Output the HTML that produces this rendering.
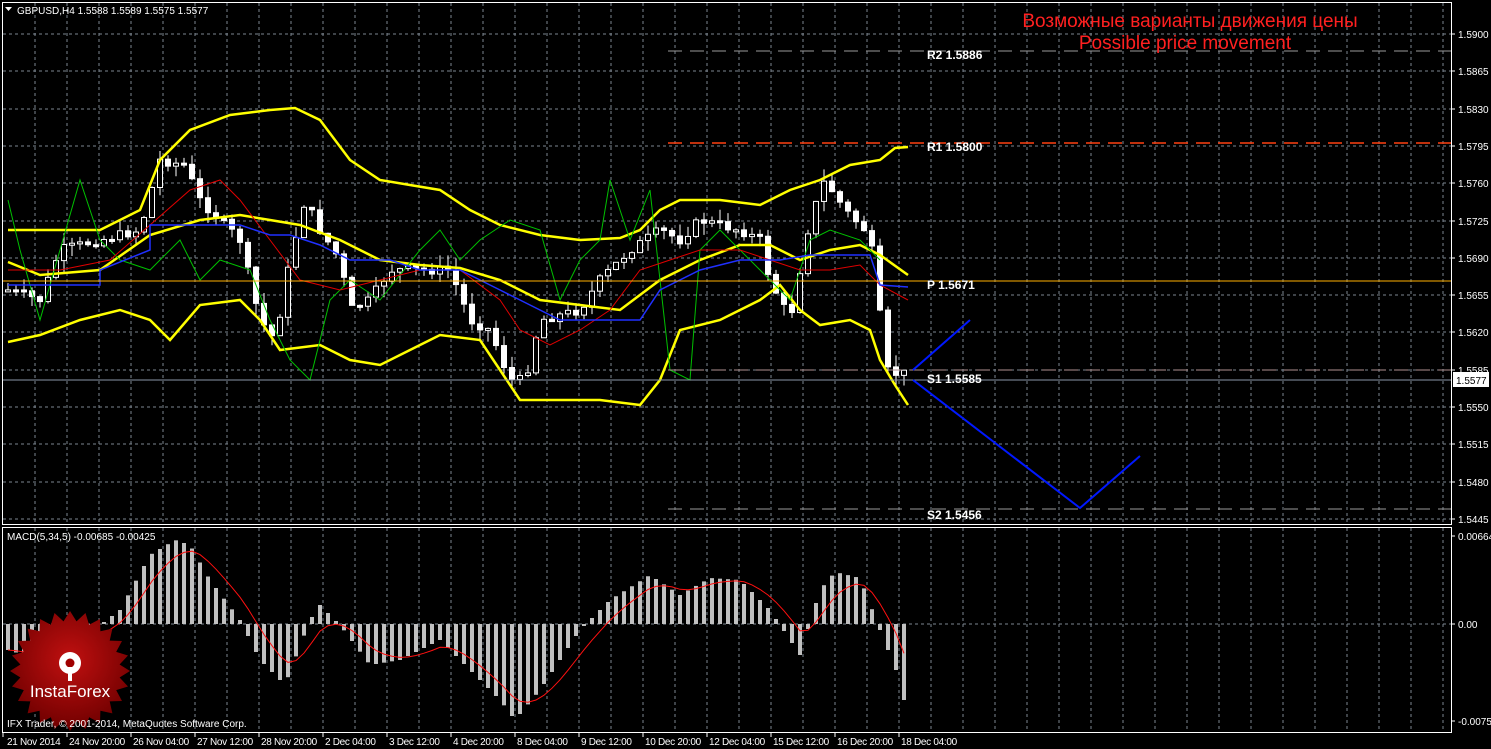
<!DOCTYPE html>
<html><head><meta charset="utf-8"><style>
html,body{margin:0;padding:0;background:#000;width:1491px;height:749px;overflow:hidden}
svg{display:block}
text{font-family:"Liberation Sans",sans-serif}
</style></head><body>
<svg id="s" width="1491" height="749" xmlns="http://www.w3.org/2000/svg">
<defs><radialGradient id="rg" cx="0.5" cy="0.4" r="0.6"><stop offset="0" stop-color="#c01010"/><stop offset="1" stop-color="#700000"/></radialGradient></defs>
<rect width="1491" height="749" fill="#000"/>
<g id="grid" stroke="#7c8690" stroke-dasharray="3,3" stroke-width="1"></g>
<g id="candles"></g>
<g fill="none" stroke-width="2.5" stroke="#ffff00">
<polyline points="8,230 40,230 100,230 140,210 160,160 190,130 230,115 270,110 295,108 320,120 350,160 380,180 410,185 440,190 470,210 500,225 540,235 580,240 620,238 640,230 660,210 680,200 720,200 760,205 790,190 820,180 850,165 880,160 895,148 908,147"/>
<polyline points="8,262 40,275 100,270 150,235 200,220 240,215 270,220 300,225 340,240 380,260 420,265 460,268 500,280 540,300 580,305 620,310 660,280 700,260 740,245 770,245 800,260 830,250 860,245 880,255 908,275"/>
<polyline points="8,342 40,335 80,320 120,310 150,320 170,340 200,305 240,300 260,320 280,350 320,345 350,360 380,365 420,345 440,335 480,340 500,370 520,400 560,400 600,400 640,405 660,380 680,330 720,320 760,300 780,285 800,310 820,325 850,320 870,330 880,360 895,385 908,405"/>
</g>
<polyline fill="none" stroke="#00c000" stroke-width="1" points="8,200 20,250 40,320 60,250 80,180 100,240 120,260 150,270 180,240 200,280 220,260 250,270 270,320 290,360 310,380 330,300 350,280 380,300 420,250 440,230 460,260 480,240 510,220 540,230 560,300 580,260 600,240 610,180 630,240 650,190 670,370 690,380 700,250 720,230 760,270 790,300 810,240 830,230 860,240 880,260"/>
<polyline fill="none" stroke="#e00000" stroke-width="1" points="8,270 60,270 110,260 150,225 190,190 220,180 240,200 270,240 300,280 340,290 380,280 420,270 460,270 500,300 520,330 550,345 580,330 610,310 640,270 670,260 700,250 740,250 770,260 800,270 830,270 860,265 880,285 908,300"/>
<polyline fill="none" stroke="#2030ff" stroke-width="1.5" points="8,285 100,285 100,270 150,250 150,225 200,225 240,225 270,235 290,235 320,245 350,260 390,260 420,270 460,270 500,290 520,300 560,320 600,320 640,320 660,290 700,270 740,260 780,260 810,255 870,255 880,285 908,287"/>
<g id="levels"></g>
<polyline fill="none" stroke="#0018ff" stroke-width="2" points="913,370 970,320"/>
<polyline fill="none" stroke="#0018ff" stroke-width="2" points="913,380 1080,508 1140,456"/>
<text x="1190" y="27" fill="#ff2020" font-size="19" text-anchor="middle">Возможные варианты движения цены</text>
<text x="1185" y="49" fill="#ff2020" font-size="19" text-anchor="middle">Possible price movement</text>
<g id="macd"></g>
<g transform="translate(70,671)">
<polygon id="star" fill="url(#rg)"/>
<g fill="#fff"><circle cx="0" cy="-8" r="11"/><circle cx="0" cy="-8" r="4.5" fill="#a00000"/><rect x="-2" y="-4" width="4" height="14"/></g>
<text x="0" y="26" fill="#fff" font-size="17" text-anchor="middle">InstaForex</text>
</g>
<text x="7" y="727" fill="#fff" font-size="10">IFX Trader, © 2001-2014, MetaQuotes Software Corp.</text>
<text x="17" y="14" fill="#fff" font-size="10">GBPUSD,H4  1.5588 1.5589 1.5575 1.5577</text>
<polygon points="5,7 12,7 8.5,11" fill="#fff"/>
<text x="7" y="540" fill="#fff" font-size="10">MACD(5,34,5) -0.00685 -0.00425</text>
<g fill="none" stroke="#fff" stroke-width="1">
<rect x="2.5" y="2.5" width="1449" height="522"/>
<rect x="2.5" y="527.5" width="1449" height="205"/>
</g>
<g id="axis" fill="#fff" font-size="10"></g>
</svg>
<script>
var NS="http://www.w3.org/2000/svg";
function el(p,t,a,txt){var e=document.createElementNS(NS,t);for(var k in a)e.setAttribute(k,a[k]);if(txt!=null)e.textContent=txt;document.getElementById(p).appendChild(e);return e;}
for(var x=35;x<1451;x+=32){el("grid","line",{x1:x,y1:3,x2:x,y2:524});el("grid","line",{x1:x,y1:528,x2:x,y2:732});}
var prices=["1.5900","1.5865","1.5830","1.5795","1.5760","1.5725","1.5690","1.5655","1.5620","1.5585","1.5550","1.5515","1.5480","1.5445"];
for(var i=0;i<prices.length;i++){var y=Math.round(34+i*37.3);if(y<523)el("grid","line",{x1:3,y1:y,x2:1451,y2:y});
el("axis","line",{x1:1451,y1:y,x2:1455,y2:y,stroke:"#fff"});el("axis","text",{x:1458,y:y+4},prices[i]);}
el("grid","line",{x1:3,y1:624,x2:1451,y2:624});
[[536,"0.00664"],[624,"0.00"],[721,"-0.0075"]].forEach(function(a){el("axis","line",{x1:1451,y1:a[0],x2:1455,y2:a[0],stroke:"#fff"});el("axis","text",{x:1458,y:a[0]+4},a[1]);});
var dates=["21 Nov 2014","24 Nov 20:00","26 Nov 04:00","27 Nov 12:00","28 Nov 20:00","2 Dec 04:00","3 Dec 12:00","4 Dec 20:00","8 Dec 04:00","9 Dec 12:00","10 Dec 20:00","12 Dec 04:00","15 Dec 12:00","16 Dec 20:00","18 Dec 04:00"];
for(var i=0;i<dates.length;i++){var x=3+i*64;el("axis","line",{x1:x,y1:733,x2:x,y2:737,stroke:"#fff"});el("axis","text",{x:i==0?7:x+2,y:745,"letter-spacing":"-0.3"},dates[i]);}
el("levels","line",{x1:668,y1:51,x2:1451,y2:51,stroke:"#9a9a9a","stroke-dasharray":"14,8"});
el("levels","line",{x1:668,y1:143,x2:1451,y2:143,stroke:"#ff4010","stroke-dasharray":"14,8","stroke-width":1.5});
el("levels","line",{x1:3,y1:281,x2:1451,y2:281,stroke:"#ffb000"});
el("levels","line",{x1:668,y1:370,x2:1451,y2:370,stroke:"#b09090","stroke-dasharray":"14,8"});
el("levels","line",{x1:3,y1:380,x2:1451,y2:380,stroke:"#8a96a8"});
el("levels","line",{x1:668,y1:509,x2:1451,y2:509,stroke:"#9a9a9a","stroke-dasharray":"14,8"});
el("levels","rect",{x:1453,y:372,width:36,height:15,fill:"#fff"});
el("levels","text",{x:1456,y:384,"font-size":"10",fill:"#000"},"1.5577");
[[59,"R2 1.5886"],[151,"R1 1.5800"],[289,"P 1.5671"],[383,"S1 1.5585"],[519,"S2 1.5456"]].forEach(function(a){el("levels","text",{x:927,y:a[0],fill:"#fff","font-size":"12","font-family":"Liberation Mono","font-weight":"bold"},a[1]);});
function interp(pts,x){if(x<=pts[0][0])return pts[0][1];for(var i=0;i<pts.length-1;i++){if(x>=pts[i][0]&&x<=pts[i+1][0]){var t=(x-pts[i][0])/(pts[i+1][0]-pts[i][0]);return pts[i][1]+t*(pts[i+1][1]-pts[i][1]);}}return pts[pts.length-1][1];}
var P=[[8,290],[40,300],[60,250],[100,240],[140,230],[160,160],[185,165],[200,200],[240,240],[260,320],[275,340],[290,260],[305,200],[320,230],[340,260],[350,310],[370,300],[390,270],[420,270],[450,270],[470,320],[490,330],[510,380],[525,380],[540,320],[580,310],[600,280],[630,250],[660,230],[680,240],[700,220],[740,230],[760,240],[770,280],[790,320],[810,220],[825,180],[845,210],[865,230],[875,260],[885,370],[900,375],[908,372]];
var seed=7;function rnd(){seed=(seed*9301+49297)%233280;return seed/233280;}
var prev=interp(P,4);
for(var x=8;x<=908;x+=8){var c=interp(P,x)+(rnd()-0.5)*10;var o=prev;var hi=Math.min(o,c)-rnd()*12,lo=Math.max(o,c)+rnd()*12;
el("candles","line",{x1:x,y1:hi,x2:x,y2:lo,stroke:"#fff"});
var bt=Math.min(o,c),bh=Math.max(2,Math.abs(c-o));
el("candles","rect",{x:x-2.5,y:bt,width:5,height:bh,fill:c<o?"#000":"#fff",stroke:"#fff","stroke-width":1});prev=c;}
var M=[[8,650],[40,660],[80,640],[120,610],[150,555],[175,540],[190,545],[210,580],[240,620],[260,660],[285,685],[310,620],[320,605],[340,625],[370,665],[400,660],[440,640],[480,680],[500,700],[515,720],[540,690],[580,630],[610,600],[650,575],[680,595],[710,578],[740,580],[770,610],[800,655],[820,590],[835,572],[860,578],[880,630],[900,680],[908,720]];
var sig=[],s=650;
for(var x=8;x<=908;x+=8){var v=interp(M,x);var y1=Math.min(624,v),h=Math.abs(v-624);
el("macd","rect",{x:x-2,y:y1,width:4,height:Math.max(1,h),fill:"#c0c0c0"});s=s+(v-s)*0.3;sig.push(x+","+s.toFixed(1));}
el("macd","polyline",{points:sig.join(" "),fill:"none",stroke:"#ff1010","stroke-width":1});
var pts=[];for(var i=0;i<48;i++){var r=i%2?50:60;var a=i*Math.PI/24;pts.push((r*Math.cos(a)).toFixed(1)+","+(r*Math.sin(a)).toFixed(1));}
document.getElementById("star").setAttribute("points",pts.join(" "));
</script>
</body></html>
